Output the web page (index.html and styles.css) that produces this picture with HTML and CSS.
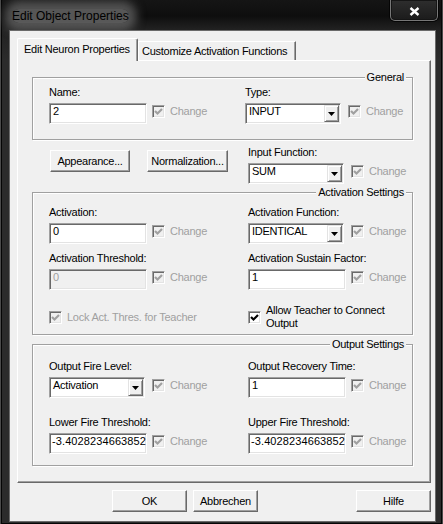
FILE: index.html
```html
<!DOCTYPE html>
<html lang="en">
<head>
<meta charset="utf-8">
<title>Edit Object Properties</title>
<link rel="stylesheet" href="styles.css">
</head>
<body>
<div class="window">
  <header class="titlebar">
    <span class="title">Edit Object Properties</span>
    <span class="close" aria-label="Close"><svg width="11" height="9" viewBox="0 0 11 9"><path d="M1.5 1l8 7M9.5 1l-8 7"/></svg></span>
  </header>

  <div class="client">
    <div class="tabs">
      <div class="tab tab-active">Edit Neuron Properties</div>
      <div class="tab">Customize Activation Functions</div>
    </div>

    <div class="panel">
      <!-- General -->
      <section class="group group-general">
        <span class="caption">General</span>
        <div class="field">
          <span class="label">Name:</span>
          <div class="row">
            <span class="edit">2</span>
            <span class="change"><span class="cb cb-dis"><svg viewBox="1 1 11 11"><path d="M3 6l2.5 2.5L10 4"/></svg></span>Change</span>
          </div>
        </div>
        <div class="field">
          <span class="label">Type:</span>
          <div class="row">
            <span class="combo"><span class="combo-text">INPUT</span><span class="combo-btn"><svg width="7" height="4" viewBox="0 0 7 4"><path d="M0 0h7L3.5 4z"/></svg></span></span>
            <span class="change"><span class="cb cb-dis"><svg viewBox="1 1 11 11"><path d="M3 6l2.5 2.5L10 4"/></svg></span>Change</span>
          </div>
        </div>
      </section>

      <div class="midrow">
        <button class="btn btn-appearance" type="button">Appearance...</button>
        <button class="btn btn-norm" type="button">Normalization...</button>
        <div class="field field-input-fn">
          <span class="label">Input Function:</span>
          <div class="row">
            <span class="combo"><span class="combo-text">SUM</span><span class="combo-btn"><svg width="7" height="4" viewBox="0 0 7 4"><path d="M0 0h7L3.5 4z"/></svg></span></span>
            <span class="change"><span class="cb cb-dis"><svg viewBox="1 1 11 11"><path d="M3 6l2.5 2.5L10 4"/></svg></span>Change</span>
          </div>
        </div>
      </div>

      <!-- Activation Settings -->
      <section class="group group-act">
        <span class="caption">Activation Settings</span>
        <div class="field">
          <span class="label">Activation:</span>
          <div class="row">
            <span class="edit">0</span>
            <span class="change"><span class="cb cb-dis"><svg viewBox="1 1 11 11"><path d="M3 6l2.5 2.5L10 4"/></svg></span>Change</span>
          </div>
        </div>
        <div class="field">
          <span class="label">Activation Function:</span>
          <div class="row">
            <span class="combo"><span class="combo-text">IDENTICAL</span><span class="combo-btn"><svg width="7" height="4" viewBox="0 0 7 4"><path d="M0 0h7L3.5 4z"/></svg></span></span>
            <span class="change"><span class="cb cb-dis"><svg viewBox="1 1 11 11"><path d="M3 6l2.5 2.5L10 4"/></svg></span>Change</span>
          </div>
        </div>
        <div class="field">
          <span class="label">Activation Threshold:</span>
          <div class="row">
            <span class="edit edit-dis">0</span>
            <span class="change"><span class="cb cb-dis"><svg viewBox="1 1 11 11"><path d="M3 6l2.5 2.5L10 4"/></svg></span>Change</span>
          </div>
        </div>
        <div class="field">
          <span class="label">Activation Sustain Factor:</span>
          <div class="row">
            <span class="edit">1</span>
            <span class="change"><span class="cb cb-dis"><svg viewBox="1 1 11 11"><path d="M3 6l2.5 2.5L10 4"/></svg></span>Change</span>
          </div>
        </div>
        <div class="check check-dis">
          <span class="cb cb-dis"><svg viewBox="1 1 11 11"><path d="M3 6l2.5 2.5L10 4"/></svg></span>
          <span>Lock Act. Thres. for Teacher</span>
        </div>
        <div class="check">
          <span class="cb"><svg viewBox="1 1 11 11"><path d="M3 6l2.5 2.5L10 4"/></svg></span>
          <span class="check-text">Allow Teacher to Connect Output</span>
        </div>
      </section>

      <!-- Output Settings -->
      <section class="group group-out">
        <span class="caption">Output Settings</span>
        <div class="field">
          <span class="label">Output Fire Level:</span>
          <div class="row">
            <span class="combo"><span class="combo-text">Activation</span><span class="combo-btn"><svg width="7" height="4" viewBox="0 0 7 4"><path d="M0 0h7L3.5 4z"/></svg></span></span>
            <span class="change"><span class="cb cb-dis"><svg viewBox="1 1 11 11"><path d="M3 6l2.5 2.5L10 4"/></svg></span>Change</span>
          </div>
        </div>
        <div class="field">
          <span class="label">Output Recovery Time:</span>
          <div class="row">
            <span class="edit">1</span>
            <span class="change"><span class="cb cb-dis"><svg viewBox="1 1 11 11"><path d="M3 6l2.5 2.5L10 4"/></svg></span>Change</span>
          </div>
        </div>
        <div class="field">
          <span class="label">Lower Fire Threshold:</span>
          <div class="row">
            <span class="edit edit-long">-3.40282346638529</span>
            <span class="change"><span class="cb cb-dis"><svg viewBox="1 1 11 11"><path d="M3 6l2.5 2.5L10 4"/></svg></span>Change</span>
          </div>
        </div>
        <div class="field">
          <span class="label">Upper Fire Threshold:</span>
          <div class="row">
            <span class="edit edit-long">-3.40282346638529</span>
            <span class="change"><span class="cb cb-dis"><svg viewBox="1 1 11 11"><path d="M3 6l2.5 2.5L10 4"/></svg></span>Change</span>
          </div>
        </div>
      </section>
    </div>

    <div class="buttons">
      <button class="btn btn-ok" type="button">OK</button>
      <button class="btn btn-cancel" type="button">Abbrechen</button>
      <button class="btn btn-help" type="button">Hilfe</button>
    </div>
  </div>
</div>
</body>
</html>
```

FILE: styles.css
```css
* { box-sizing: border-box; }

html, body { margin: 0; padding: 0; }

body {
  width: 443px;
  height: 524px;
  overflow: hidden;
  background: #1c1c1c;
  font: 11px/13px "Liberation Sans", Arial, sans-serif;
  letter-spacing: -0.25px;
  color: #000;
}

/* ---------- window frame ---------- */
.window {
  width: 443px;
  height: 524px;
  display: flex;
  flex-direction: column;
  background: linear-gradient(#151515 0, #0e0e0e 16px, #222 30px, #2b2b2b 60px, #2b2b2b 100%);
  box-shadow: inset 1px 0 0 #4a4a4a, inset 2px 0 0 #050505,
              inset -1px 0 0 #4a4a4a, inset -2px 0 0 #050505,
              inset 0 -1px 0 #050505;
}

.titlebar {
  flex: none;
  height: 30px;
  display: flex;
  justify-content: space-between;
  align-items: flex-start;
}

.title {
  margin: 9px 0 0 12px;
  font-size: 12px;
  line-height: 14px;
  letter-spacing: 0;
  color: #000;
  background: rgba(125, 125, 125, 0.65);
  border-radius: 8px;
  box-shadow: 0 0 10px 8px rgba(125, 125, 125, 0.6);
}

.close {
  width: 48px;
  height: 21px;
  margin-right: 5px;
  padding-top: 2px;
  display: flex;
  align-items: center;
  justify-content: center;
  border: 1px solid #777;
  border-top: 0;
  border-radius: 0 0 5px 5px;
  background: linear-gradient(#2e2e2e, #1b1b1b);
  box-shadow: 0 0 0 1px #050505, inset 0 0 0 1px #151515;
}

.close svg path {
  fill: none;
  stroke: #fff;
  stroke-width: 2.4;
}

/* ---------- client area ---------- */
.client {
  flex: none;
  height: 492px;
  margin: 0 7px 0 9px;
  border: 1px solid #6a6a6a;
  background: #f0f0f0;
  padding: 7px 4px 0 7px;
  display: flex;
  flex-direction: column;
}

/* tabs */
.tabs {
  display: flex;
  align-items: flex-start;
  height: 22px;
}

.tab {
  width: 158px;
  height: 19px;
  margin-top: 3px;
  padding: 3px 4px 0 3px;
  border-top: 1px solid #fff;
  border-left: 1px solid #fff;
  border-right: 1px solid #696969;
  box-shadow: inset -1px 0 0 #a0a0a0;
  white-space: nowrap;
}

.tab-active {
  position: relative;
  z-index: 1;
  width: 121px;
  height: 23px;
  margin-top: 0;
  padding: 4px 4px 0 6px;
  background: #f0f0f0;
  border-radius: 2px 2px 0 0;
}

.panel {
  border: 1px solid;
  border-color: #fff #696969 #696969 #fff;
  box-shadow: inset -1px -1px 0 #a0a0a0;
  padding: 16px 17px 16px 14px;
}

/* group boxes */
.group {
  position: relative;
  display: grid;
  grid-template-columns: 199px 1fr;
  padding-left: 16px;
  border: 1px solid #a0a0a0;
  box-shadow: inset 1px 1px 0 #fff, 1px 1px 0 #fff;
}

.group-general {
  grid-template-columns: 196px 1fr;
  padding-top: 8px;
  padding-bottom: 15px;
}

.group-act {
  margin-top: 8px;
  padding-top: 13px;
  padding-bottom: 4px;
  row-gap: 8px;
}

.group-out {
  margin-top: 9px;
  padding-top: 15px;
  padding-bottom: 11px;
  row-gap: 18px;
}

.caption {
  position: absolute;
  top: -7px;
  right: 6px;
  padding: 0 2px;
  background: #f0f0f0;
}

.field .label {
  display: block;
  margin-bottom: 4px;
  white-space: nowrap;
}

.row {
  display: grid;
  grid-template-columns: 103px auto;
  align-items: start;
}

/* edit boxes */
.edit,
.combo {
  display: block;
  height: 21px;
  background: #fff;
  border: 1px solid;
  border-color: #a0a0a0 #fff #fff #a0a0a0;
  box-shadow: inset 1px 1px 0 #696969, inset -1px -1px 0 #e3e3e3;
  white-space: nowrap;
  overflow: hidden;
}

.edit {
  width: 98px;
  padding: 1px 3px 0 3px;
  letter-spacing: 0;
}

/* long numbers start right at the border and run past the right edge */
.edit-long {
  padding-left: 2px;
  padding-right: 1px;
  letter-spacing: 0.1px;
}

.edit-dis {
  background: #f0f0f0;
  color: #a0a0a0;
}

/* drop-down lists */
.combo {
  width: 96px;
  padding: 1px;
  display: flex;
  align-items: flex-start;
}

.combo-text {
  flex: 1;
  padding: 0 0 0 2px;
  overflow: hidden;
}

.combo-btn {
  flex: none;
  width: 15px;
  height: 17px;
  display: flex;
  align-items: center;
  justify-content: center;
  background: #f0f0f0;
  border: 1px solid;
  border-color: #e3e3e3 #696969 #696969 #e3e3e3;
  box-shadow: inset 1px 1px 0 #fff, inset -1px -1px 0 #a0a0a0;
}

.combo-btn svg path { fill: #000; }

/* check boxes */
.change {
  display: flex;
  align-items: center;
  gap: 5px;
  height: 16px;
  color: #a0a0a0;
}

.cb {
  flex: none;
  width: 13px;
  height: 13px;
  border: 1px solid;
  border-color: #a0a0a0 #fff #fff #a0a0a0;
  box-shadow: inset 1px 1px 0 #696969, inset -1px -1px 0 #e3e3e3;
  background: #fff;
}

.cb svg {
  display: block;
  width: 11px;
  height: 11px;
}

.cb svg path {
  fill: none;
  stroke: #000;
  stroke-width: 2.2;
}

.cb-dis { background: #f0f0f0; }
.cb-dis svg path { stroke: #a0a0a0; }

.check {
  display: flex;
  align-items: center;
  gap: 5px;
  margin-top: 6px;
}

.check-dis { color: #a0a0a0; }

.check-text { width: 130px; }

/* push buttons */
.btn {
  height: 22px;
  padding: 0;
  margin: 0;
  font: inherit;
  letter-spacing: inherit;
  color: #000;
  background: #f0f0f0;
  border: 1px solid;
  border-color: #fff #696969 #696969 #fff;
  box-shadow: inset -1px -1px 0 #a0a0a0;
  border-radius: 0;
  text-align: center;
  -webkit-appearance: none;
  appearance: none;
}

.midrow {
  display: flex;
  align-items: flex-start;
  margin-top: 6px;
}

.btn-appearance {
  width: 80px;
  margin: 4px 0 0 18px;
}

.btn-norm {
  width: 81px;
  margin: 4px 0 0 17px;
}

.field-input-fn { margin-left: 20px; }

.buttons {
  display: flex;
  margin-top: 7px;
}

.btn-ok { width: 75px; margin-left: 95px; }
.btn-cancel { width: 65px; margin-left: 6px; }
.btn-help { width: 75px; margin-left: auto; }
```
